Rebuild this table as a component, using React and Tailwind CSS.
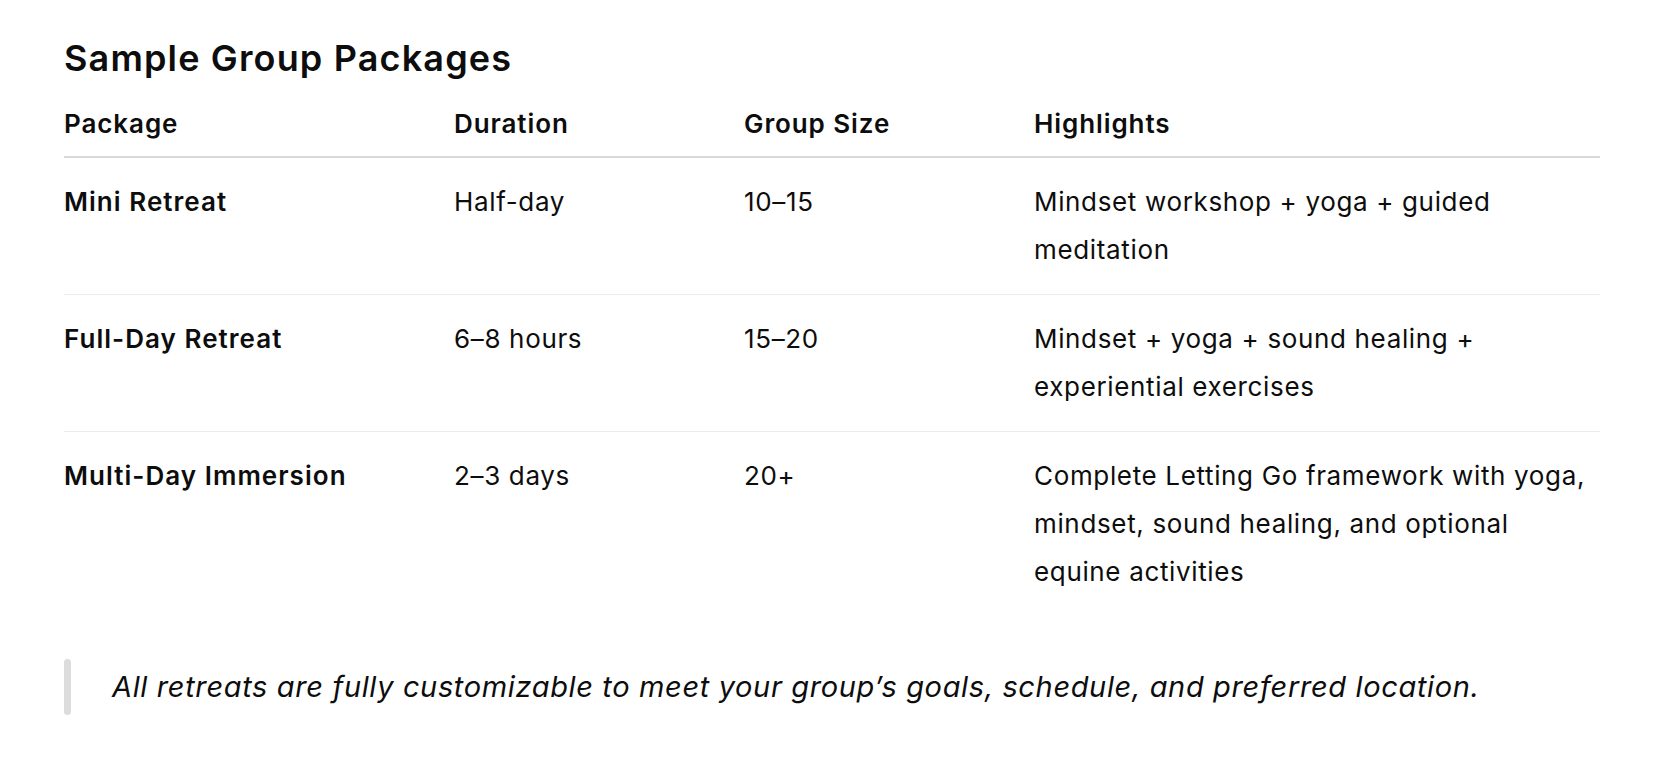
const rows = [
  {
    name: "Mini Retreat",
    duration: "Half-day",
    size: "10–15",
    highlights: "Mindset workshop + yoga + guided meditation",
  },
  {
    name: "Full-Day Retreat",
    duration: "6–8 hours",
    size: "15–20",
    highlights: "Mindset + yoga + sound healing + experiential exercises",
  },
  {
    name: "Multi-Day Immersion",
    duration: "2–3 days",
    size: "20+",
    highlights:
      "Complete Letting Go framework with yoga, mindset, sound healing, and optional equine activities",
  },
];

const App = () => {
  return (
    <div
      className="min-h-screen bg-white text-[#0d0d0d] pl-[64px] pr-[72px] pt-[34px]"
      style={{ fontFamily: "Inter, 'Noto Sans', sans-serif" }}
    >
      <h2 className="text-[36px] leading-[48px] font-semibold tracking-[0.032em]">
        Sample Group Packages
      </h2>

      <table className="w-full table-fixed mt-[18px] border-collapse text-[26px] leading-[48px] tracking-[0.025em]">
        <colgroup>
          <col className="w-[390px]" />
          <col className="w-[290px]" />
          <col className="w-[290px]" />
          <col />
        </colgroup>
        <thead>
          <tr className="border-b-2 border-[#d9d9d9] text-left">
            <th className="font-semibold tracking-[0.035em] pb-[8px]">Package</th>
            <th className="font-semibold tracking-[0.035em] pb-[8px]">Duration</th>
            <th className="font-semibold tracking-[0.035em] pb-[8px]">Group Size</th>
            <th className="font-semibold tracking-[0.035em] pb-[8px]">Highlights</th>
          </tr>
        </thead>
        <tbody>
          {rows.map((r, i) => (
            <tr
              key={i}
              className={`align-top ${
                i < rows.length - 1 ? "border-b border-[#ececec]" : ""
              }`}
            >
              <td className="font-semibold tracking-[0.04em] py-[20px] pr-4">{r.name}</td>
              <td className="py-[20px] pr-4">{r.duration}</td>
              <td className="py-[20px] pr-4">{r.size}</td>
              <td className="py-[20px] pr-[10px]">{r.highlights}</td>
            </tr>
          ))}
        </tbody>
      </table>

      <div className="flex items-center gap-[41px] mt-[43px]">
        <div className="w-[7px] h-[56px] rounded-full bg-[#dcdcdc] shrink-0" />
        <p className="italic text-[29px] leading-[40px] tracking-[0.022em]">
          All retreats are fully customizable to meet your group’s goals,
          schedule, and preferred location.
        </p>
      </div>
    </div>
  );
};

export default App;
